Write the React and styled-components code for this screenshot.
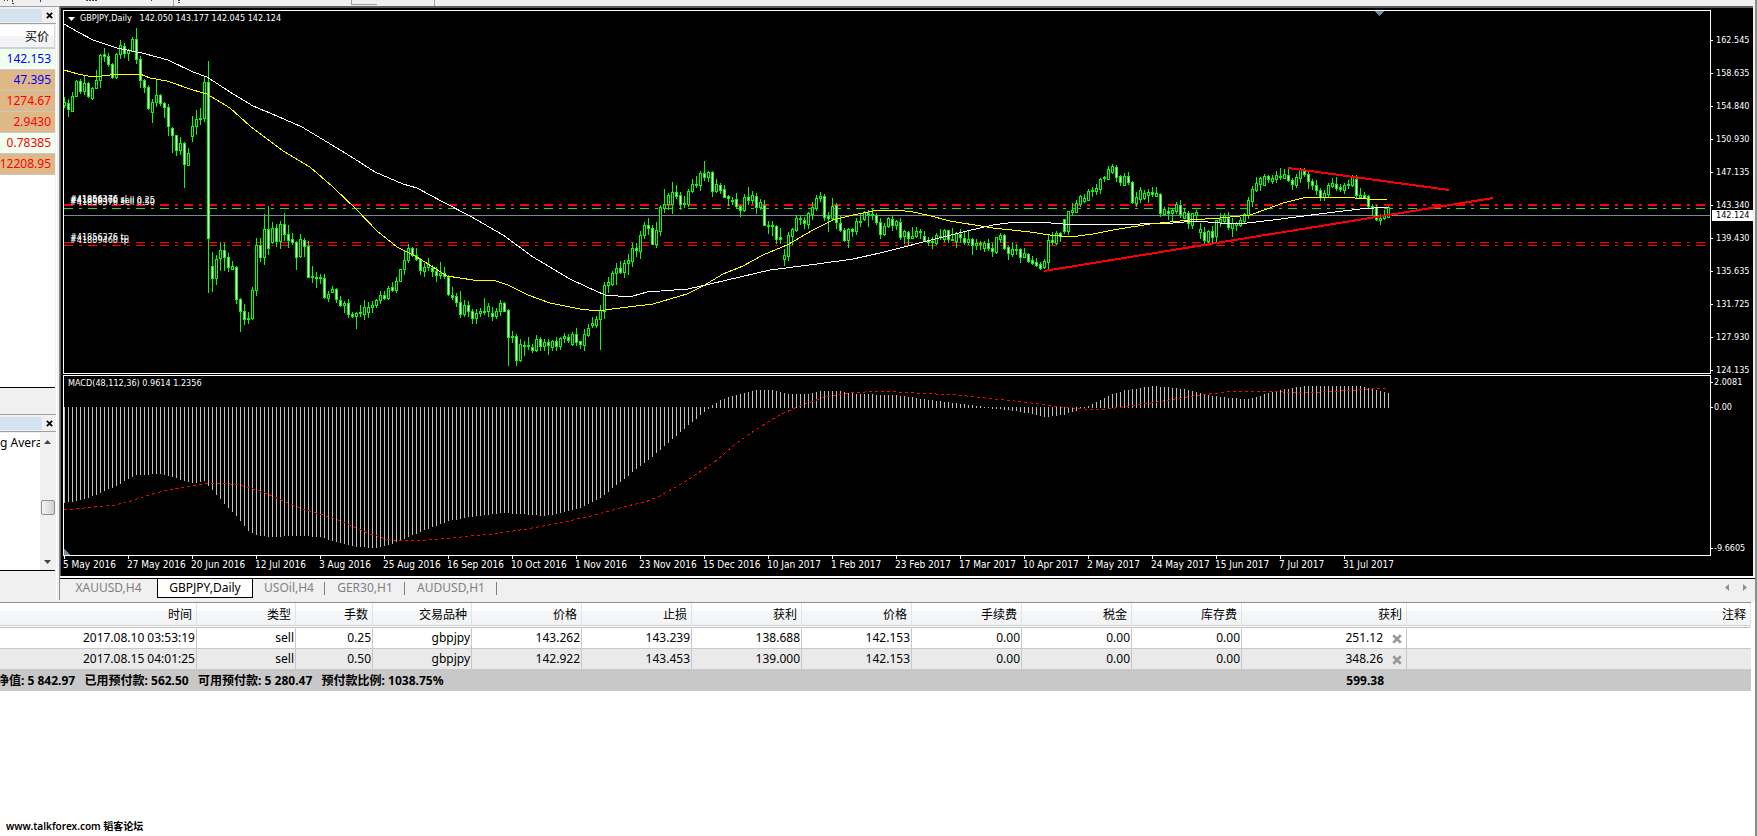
import React from "react";
import styled, { createGlobalStyle } from "styled-components";

const UI_FONT = '"Noto Sans", "Noto Sans CJK SC", sans-serif';
const CHART_FONT = '"DejaVu Sans Condensed", "DejaVu Sans", sans-serif';

const GlobalStyle = createGlobalStyle`
  *, *::before, *::after { box-sizing: border-box; }
  body { margin: 0; background: #fff; font-family: ${UI_FONT}; font-size: 12px; color: #000; }
  button { font: inherit; color: inherit; background: none; border: 0; padding: 0; cursor: pointer; }
  svg { display: block; }
`;

/* ---------- data ---------- */

// Daily bars as "high,bodyTop,bodyBottom,low" followed by u (bull) or d (bear), in chart rows.
const BARS = `97,102,105,107u 99,103,109,116d 92,96,111,111u 80,81,96,96u 79,81,91,93d 76,83,91,94u 82,83,96,97d 87,88,98,99u 70,80,88,88u 54,55,80,87u
48,54,56,61d 53,56,64,66d 63,64,77,78d 53,54,77,78u 40,45,54,58u 43,46,53,57d 49,50,53,60u 37,39,51,51u 28,39,59,63d 56,59,80,87d
79,80,87,92d 85,87,108,109d 99,102,112,122u 79,95,102,106u 94,95,103,105d 102,103,107,117d 104,107,126,135d 127,128,135,152d 135,135,150,155d 137,143,150,154u
142,143,164,187d 148,153,165,165u 116,126,136,141u 110,119,126,134u 108,118,119,124u 77,82,118,121u 61,82,238,292d 252,266,278,291d 255,259,278,284u 242,250,258,270u
243,250,257,270d 253,257,267,271d 261,266,269,269u 266,267,299,303d 298,299,311,331d 304,311,319,324d 312,318,319,323u 287,290,318,319u 238,245,290,295u 238,245,257,261d
214,229,257,264u 206,229,248,254d 222,228,242,243u 224,228,241,246d 221,224,241,248u 213,224,234,240d 225,234,240,247d 233,239,242,244d 241,242,257,269d 234,239,256,257u
238,240,246,256d 241,246,277,277d 266,276,277,282d 272,277,278,287u 274,277,278,283u 274,278,297,298d 291,294,298,301u 286,289,292,292u 288,289,299,302d 296,300,305,306d
301,303,305,312u 299,303,314,317d 312,314,316,317d 312,313,316,328u 305,312,313,316u 300,307,314,319u 302,307,312,317u 301,305,307,312u 299,300,305,307u 291,295,300,303u
291,295,298,299d 286,288,298,299u 282,287,290,291d 277,281,290,292u 269,269,281,281u 250,260,269,274u 244,248,260,262u 247,248,255,256d 248,255,259,260d 258,259,270,274d
263,267,271,276u 258,264,267,270u 265,268,271,276d 267,271,275,281d 262,273,275,278u 267,273,276,278d 275,277,294,295d 287,295,297,299d 293,296,302,306d 291,302,314,317d
300,305,314,316u 301,305,311,316d 309,311,318,323d 309,313,318,323u 308,311,313,316u 298,311,312,314u 303,306,311,316u 307,313,316,320d 308,311,316,318u 300,303,311,315u
302,303,311,311d 309,310,337,365d 331,336,337,342d 334,336,360,365d 339,344,360,361u 341,345,346,355u 337,345,346,349u 344,347,350,352d 335,339,350,351u 337,339,346,350d
339,342,346,350u 339,342,345,354d 340,341,347,350u 337,341,346,350d 337,338,346,349u 333,336,338,342u 334,337,340,342d 332,334,344,345u 328,334,342,345d 341,341,344,348d
329,334,345,350u 324,328,335,336u 317,323,325,327u 316,319,325,327u 305,310,319,349u 282,285,311,318u 277,282,285,292u 271,273,284,285u 263,268,273,284u 261,268,272,273d
260,263,272,277u 254,260,263,274u 243,248,261,266u 243,248,250,256d 231,235,251,258u 222,225,235,238u 218,225,228,234d 225,228,244,244d 222,230,244,247u 205,207,231,235u
189,204,208,212u 193,195,204,209u 182,192,204,213u 185,192,196,198d 192,195,204,209d 196,203,204,207u 189,191,204,206u 179,184,191,192u 176,184,185,187u 171,173,185,190u
161,173,177,180d 171,172,177,181u 171,172,191,196d 179,184,191,192u 183,185,190,193d 185,189,197,197d 195,196,198,205d 197,200,201,204u 193,199,206,208d 205,206,210,216d
194,197,210,211u 187,197,200,204d 191,195,200,203u 193,196,207,213d 199,202,207,209u 200,205,225,225d 221,225,226,233d 221,225,226,235u 225,226,239,243d 228,237,239,243d
249,255,259,265u 232,235,256,260u 228,229,236,244u 215,218,230,231u 216,218,219,224u 217,220,223,228d 212,213,224,228u 202,207,214,219u 195,198,208,210u 192,196,198,201u
194,196,217,220d 212,216,218,231d 198,206,218,220u 203,205,222,228d 216,223,230,231d 228,230,240,241d 228,229,240,247u 228,229,231,236d 218,221,231,234u 214,221,222,226u
211,212,219,220u 210,213,214,226u 209,214,215,219u 213,215,222,224d 218,222,234,238d 223,226,234,235u 217,218,226,227u 216,219,225,230d 220,221,225,229u 218,222,237,239d
230,231,236,243u 231,232,238,244d 227,236,238,238u 227,231,236,237u 229,231,232,238u 231,236,240,241d 237,240,242,245d 237,241,242,248u 233,235,243,244u 229,236,237,239u
229,230,239,241u 230,230,239,242d 228,239,240,240u 232,233,241,247u 229,234,237,242d 232,238,242,244d 231,239,242,244u 238,239,245,254d 239,243,245,249u 241,243,244,249u
241,243,248,251u 239,243,248,250d 243,248,251,256d 237,237,252,253u 233,235,239,242u 234,235,248,249d 246,247,253,259d 242,249,254,256u 244,249,250,254u 248,249,257,262d
248,253,257,257u 253,254,261,262d 256,260,263,264d 258,262,265,266d 262,264,268,269d 259,261,267,268u 234,240,262,268u 232,240,242,244d 231,233,243,244u 232,233,236,241d
219,219,231,233d 211,211,231,234u 203,210,212,214u 200,203,212,212u 195,196,204,206u 194,198,201,202u 189,191,200,200u 187,190,191,196u 184,188,191,194u 178,179,189,193u
176,177,178,181u 166,169,179,179u 164,166,172,173u 165,167,177,181d 175,176,182,185d 173,176,185,185u 172,176,182,184d 181,182,202,203d 192,197,203,206u 187,190,199,202u
190,193,198,199u 189,192,195,202u 187,192,194,196d 187,193,196,196u 193,194,213,216d 207,209,214,215u 207,211,213,219d 208,210,213,221u 202,204,211,213u 200,205,214,217d
208,212,218,218u 211,213,223,228d 213,213,225,228u 210,212,215,220u 223,229,232,238u 227,232,240,244d 230,231,241,244u 226,231,237,242d 220,220,236,241u 213,219,222,226u
213,215,221,223u 212,218,227,229d 218,223,228,236u 222,223,225,230u 217,220,225,226u 213,214,221,222u 197,200,215,218u 186,189,201,206u 177,183,190,191u 177,178,184,190u
174,176,185,185u 175,176,179,182d 175,178,181,183u 171,175,179,182u 168,176,177,179u 169,174,178,178u 169,175,180,181d 178,180,184,189d 174,177,185,187u 168,170,178,182u
168,171,174,176d 171,174,181,188d 179,181,185,189d 180,185,190,194d 188,190,197,200d 190,193,197,200u 183,185,194,196u 178,183,186,187u 177,184,188,190d 184,187,189,191d
183,185,190,193u 180,184,185,188u 175,177,185,186u 175,179,195,197d 188,195,197,197u 192,195,198,198d 195,196,206,207d 204,206,208,215d 205,207,219,220d 214,218,220,224u
210,216,218,219u 206,207,217,217u`
  .split(/\s+/)
  .map((bar) => ({ rows: bar.slice(0, -1).split(",").map(Number), bear: bar.endsWith("d") }));

const SLOW_MA =
  "64,24 78,32 93,40 117,48 142,53 168,60 193,72 207,77 230,92 253,106 277,116 302,127 327,142 350,156 375,172 403,184 417,188 443,202 470,216 503,235 533,257 570,279 587,287 605,295 618,296 633,296 647,292 688,289 710,284 740,277 770,270 817,264 853,259 880,253 900,248 923,242 967,231 993,225 1015,222 1038,222 1063,224 1140,224 1173,223 1195,221 1220,223 1247,223 1273,220 1327,213 1360,209 1388,207";
const FAST_MA =
  "64,70 78,74 88,76 102,76 118,74 140,74 150,78 167,81 193,90 207,94 230,108 250,126 283,151 310,167 333,187 357,210 377,231 397,247 417,257 447,276 473,280 493,280 508,285 528,295 550,303 580,309 597,311 620,308 653,304 687,294 703,286 723,274 743,266 763,255 787,245 813,230 833,220 853,215 873,211 897,210 913,212 927,215 950,221 993,228 1030,232 1050,235 1070,237 1093,234 1113,230 1150,224 1190,220 1220,218 1250,215 1267,209 1283,203 1307,197 1343,197 1367,199 1387,200";
const SIGNAL =
  "64,510 115,505 128,502 143,497 167,490 203,484 220,483 240,485 260,491 300,508 336,519 370,534 390,540 415,541 450,538 493,534 527,529 560,523 595,515 627,506 645,502 660,496 688,480 717,460 735,444 754,431 776,417 797,407 825,397 849,393 882,391 915,393 957,395 1023,402 1061,407 1085,409 1108,409 1151,403 1193,396 1226,392 1269,391 1283,392 1321,392 1358,390 1387,388";
const HISTOGRAM = [
  [64, 502], [80, 499], [97, 494], [105, 489], [115, 486], [125, 479], [137, 474], [160, 473], [173, 476], [187, 481],
  [197, 482], [204, 480], [212, 489], [220, 498], [228, 507], [233, 512], [241, 521], [248, 530], [257, 534], [267, 536],
  [297, 535], [320, 536], [336, 541], [358, 546], [374, 547], [390, 544], [420, 531], [448, 520], [470, 516], [504, 512], [545, 515],
  [570, 510], [583, 506], [600, 497], [616, 484], [644, 462], [660, 449], [681, 430], [705, 410], [712, 405], [720, 400],
  [735, 395], [757, 390], [773, 390], [787, 394], [809, 394], [820, 391], [837, 391], [856, 394], [896, 395], [929, 400],
  [962, 404], [985, 407], [1009, 409], [1033, 413], [1045, 416], [1063, 414], [1075, 410], [1088, 406], [1103, 398],
  [1115, 393], [1125, 390], [1155, 386], [1184, 389], [1207, 395], [1231, 398], [1248, 399], [1259, 396], [1278, 390],
  [1306, 386], [1358, 386], [1377, 390], [1389, 393],
];

const PRICE_TICKS = ["162.545", "158.635", "154.840", "150.930", "147.135", "143.340", "139.430", "135.635", "131.725", "127.930", "124.135"];
const DATES = [
  "5 May 2016", "27 May 2016", "20 Jun 2016", "12 Jul 2016", "3 Aug 2016", "25 Aug 2016", "16 Sep 2016", "10 Oct 2016",
  "1 Nov 2016", "23 Nov 2016", "15 Dec 2016", "10 Jan 2017", "1 Feb 2017", "23 Feb 2017", "17 Mar 2017", "10 Apr 2017",
  "2 May 2017", "24 May 2017", "15 Jun 2017", "7 Jul 2017", "31 Jul 2017",
];
const QUOTES = [
  { price: "142.153", color: "#0000ff", bg: "#f0fff0" },
  { price: "47.395", color: "#0000ff", bg: "#deb887" },
  { price: "1274.67", color: "#ff0000", bg: "#deb887" },
  { price: "2.9430", color: "#ff0000", bg: "#deb887" },
  { price: "0.78385", color: "#ff0000", bg: "#f0fff0" },
  { price: "12208.95", color: "#ff0000", bg: "#deb887" },
];
const TABS = [
  { name: "XAUUSD,H4", width: 97 },
  { name: "GBPJPY,Daily", width: 96, active: true },
  { name: "USOil,H4", width: 72, divided: true },
  { name: "GER30,H1", width: 80, divided: true },
  { name: "AUDUSD,H1", width: 92, divided: true },
];
const COLUMNS = [
  ["时间", 197], ["类型", 99], ["手数", 77], ["交易品种", 99], ["价格", 110], ["止损", 110], ["获利", 110],
  ["价格", 110], ["手续费", 110], ["税金", 110], ["库存费", 110], ["获利", 165], ["注释", 0],
];
const ORDERS = [
  ["2017.08.10 03:53:19", "sell", "0.25", "gbpjpy", "143.262", "143.239", "138.688", "142.153", "0.00", "0.00", "0.00", "251.12"],
  ["2017.08.15 04:01:25", "sell", "0.50", "gbpjpy", "142.922", "143.453", "139.000", "142.153", "0.00", "0.00", "0.00", "348.26"],
];

function histogramRow(x) {
  const k = Math.max(1, HISTOGRAM.findIndex(([px]) => px >= x));
  const [x0, y0] = HISTOGRAM[k - 1];
  const [x1, y1] = HISTOGRAM[k];
  return Math.round(y0 + ((y1 - y0) * (x - x0)) / (x1 - x0));
}

/* ---------- styled parts ---------- */

const Window = styled.div`
  display: flex;
  flex-direction: column;
  min-height: 100vh;
  border-right: 2px solid;
  border-image: linear-gradient(to right, #111 50%, #8c8c8c 50%) 1;
  overflow: hidden;
`;
const ToolStrip = styled.div`
  height: 6px;
  background: #f0f0f0;
`;
const Workspace = styled.div`
  display: flex;
  background: #f0f0f0;
`;
const Sidebar = styled.aside`
  flex: 0 0 60px;
  min-width: 0;
  display: flex;
  flex-direction: column;
  border-top: 1px solid #a0a0a0;
  border-right: 1px solid #8c8c8c;
  padding-right: 3px;
  box-shadow: inset -2px 0 #f0f0f0, inset -3px 0 #fff;
`;
const Panel = styled.section`
  display: flex;
  flex-direction: column;
  min-width: 0;
  border-bottom: ${(p) => (p.$last ? 0 : "1px solid #a0a0a0")};
`;
const PanelTitle = styled.div`
  display: flex;
  align-items: center;
  justify-content: flex-end;
  height: 17px;
  padding-right: 2px;
  margin-bottom: 1px;
  background: linear-gradient(#d5e2ef, #d5e2ef) 0 2px / 42px 13px no-repeat;
  border-bottom: 1px solid #a0a0a0;
`;
const CloseButton = styled.button`
  display: grid;
  place-items: center;
  width: 9px;
  height: 9px;
`;
const QuoteArea = styled.div`
  height: 363px;
  margin-right: 1px;
  background: #fff;
  border-bottom: 1px solid #000;
`;
const QuoteTable = styled.table`
  width: 55px;
  border-spacing: 0;
  table-layout: fixed;
`;
const QuoteHead = styled.th`
  height: 24px;
  padding: 0 5px 0 0;
  font-weight: normal;
  text-align: right;
  background: linear-gradient(#fff 50%, #f1f3f6 50%);
  border-right: 1px solid #d9d9d9;
  border-bottom: 2px solid #d0d0d0;
`;
const QuoteCell = styled.td`
  height: 21px;
  padding: 0 4px 0 0;
  line-height: 20px;
  text-align: right;
  direction: rtl;
  color: ${(p) => p.$color};
  background: ${(p) => p.$bg};
  border-bottom: 1px solid #c8c8c8;
`;
const PanelFoot = styled.div`
  height: 26px;
`;
const NavArea = styled.div`
  display: flex;
  height: 138px;
  margin-right: 1px;
  background: #fff;
  border-bottom: 1px solid #000;
`;
const NavItem = styled.div`
  flex: 1;
  min-width: 0;
  padding-top: 1px;
  line-height: 18px;
  white-space: nowrap;
  overflow: hidden;
`;
const ScrollTrack = styled.div`
  display: flex;
  flex-direction: column;
  align-items: center;
  flex: 0 0 15px;
  background: #f0f0f0;
`;
const ScrollArrow = styled.button`
  display: grid;
  place-items: center;
  width: 15px;
  height: 17px;
`;
const ScrollThumb = styled.div`
  width: 14px;
  height: 15px;
  margin: 50px 0 auto;
  border: 1px solid #8e8e8e;
  border-radius: 2px;
  background: linear-gradient(to right, #f4f4f4, #cfcfcf);
`;
const Main = styled.main`
  flex: 1;
  min-width: 0;
  display: flex;
  flex-direction: column;
`;
const ChartFrame = styled.div`
  display: flex;
  flex-direction: column;
  gap: 1px;
  margin-right: 2px;
  padding: 2px 0 0 2px;
  background: #000;
  color: #fff;
  font-family: ${CHART_FONT};
  font-size: 9px;
  line-height: 11px;
  border-top: 2px solid #5c5c5c;
  border-left: 1px solid #5c5c5c;
`;
const PaneRow = styled.div`
  display: flex;
  height: ${(p) => p.$height}px;
  position: relative;
`;
const Plot = styled.div`
  flex: 1;
  min-width: 0;
  position: relative;
  border: 1px solid #fff;
  overflow: hidden;
`;
const PlotTitle = styled.div`
  position: absolute;
  top: 2px;
  left: 4px;
  display: flex;
  align-items: center;
  gap: 5px;
  white-space: pre;
`;
const Axis = styled.div`
  flex: 0 0 42px;
  display: flex;
  flex-direction: column;
  gap: ${(p) => p.$gap}px;
  padding: ${(p) => p.$top}px 0 2px;
`;
const AxisTick = styled.div`
  display: flex;
  flex-shrink: 0;
  align-items: center;
  gap: ${(p) => p.$gap}px;
  height: 11px;
  margin-top: ${(p) => (p.$last ? "auto" : 0)};
  &::before {
    content: "";
    width: 2px;
    height: 1px;
    background: #fff;
  }
`;
const BidTag = styled.div`
  position: absolute;
  top: 200px;
  right: 0;
  width: 41px;
  padding-left: 4px;
  background: #fff;
  color: #000;
`;
const TimeAxis = styled.div`
  display: flex;
  height: 20px;
  margin-top: -1px;
  font-size: 10px;
  overflow: hidden;
`;
const TimeTick = styled.div`
  flex: 0 0 64px;
  padding-top: 3px;
  white-space: nowrap;
  background: linear-gradient(#fff, #fff) 1px 0 / 1px 3px no-repeat;
`;
const TabBar = styled.nav`
  display: flex;
  height: 22px;
  padding-right: 8px;
  border-top: 1px solid #000;
  box-shadow: 0 -2px #fff;
`;
const Tab = styled.button`
  height: ${(p) => (p.$active ? 19 : 18)}px;
  width: ${(p) => p.$width}px;
  line-height: 18px;
  color: ${(p) => (p.$active ? "#000" : "#808080")};
  background: ${(p) => (p.$active ? "#fff" : "none")};
  border: solid #000;
  border-width: ${(p) => (p.$active ? "0 1px 1px 1px" : 0)};
  position: relative;
  &::after {
    content: "";
    display: ${(p) => (p.$divided ? "block" : "none")};
    position: absolute;
    right: 0;
    top: 3px;
    width: 1px;
    height: 13px;
    background: #808080;
  }
`;
const TabArrows = styled.div`
  display: flex;
  gap: 14px;
  margin-left: auto;
  height: 17px;
  align-items: center;
`;
const Terminal = styled.section`
  margin-right: 4px;
  border-top: 1px solid #909090;
  background: #fff;
`;
const TerminalGap = styled.div`
  height: 2px;
  background: #f0f0f0;
`;
const OrderTable = styled.table`
  width: 100%;
  table-layout: fixed;
  border-collapse: separate;
  border-spacing: 0;
`;
const HeadCell = styled.th`
  height: 25px;
  padding: 0 4px 3px 0;
  font-weight: normal;
  text-align: right;
  background: linear-gradient(to bottom, #fff 8px, #f6f7f9 8px, #f1f3f5 22px, #d0d0d0 22px, #d0d0d0 23px, #fff 23px, #fff 24px, #c0c0c0 24px);
  border-right: 1px solid #e2e4e7;
`;
const Cell = styled.td`
  height: 21px;
  padding: 0 1px 0 0;
  line-height: 20px;
  text-align: right;
  white-space: nowrap;
  background: ${(p) => (p.$odd ? "#eaeaea" : "#fff")};
  border-right: ${(p) => (p.$last ? 0 : "1px solid #c8c8c8")};
  border-bottom: 1px solid #c8c8c8;
`;
const Profit = styled.div`
  display: flex;
  justify-content: flex-end;
  align-items: center;
  gap: 9px;
  padding-right: 4px;
`;
const SumCell = styled.td`
  height: 21px;
  padding: 0 23px 0 0;
  line-height: 20px;
  font-weight: bold;
  text-align: ${(p) => (p.$left ? "left" : "right")};
  white-space: pre;
  overflow: hidden;
  background: #c8c8c8;
`;
const Balance = styled.span`
  margin-left: -3px;
`;
const Credit = styled.footer`
  margin-top: auto;
  padding: 0 6px 2px;
  font-size: 10px;
  line-height: 16px;
  font-weight: 600;
`;

/* ---------- drawings ---------- */

const Cross = ({ size, color, weight }) => (
  <svg width={size} height={size} viewBox="0 0 8 8" aria-hidden="true">
    <path d="M1 1L7 7M7 1L1 7" stroke={color} strokeWidth={weight} />
  </svg>
);

const Arrow = ({ d, color, w, h }) => (
  <svg width={w} height={h} aria-hidden="true">
    <path d={d} fill={color} />
  </svg>
);

const OrderLine = ({ y, color, width }) => (
  <line x1="0" x2="100%" y1={y} y2={y} stroke={color} strokeWidth={width} strokeDasharray="9 6 3 6" />
);

function PriceChart() {
  return (
    <svg width="100%" height="362" shapeRendering="crispEdges" role="img" aria-label="GBPJPY daily candles">
      <g transform="translate(0 -11)">
        <OrderLine y={205} color="#ff0000" width={2} />
        <OrderLine y={208.5} color="#32cd32" width={1} />
        <line x1="0" x2="100%" y1="215.5" y2="215.5" stroke="#778899" />
        <OrderLine y={242.5} color="#ff0000" width={1} />
        <OrderLine y={245.5} color="#ff0000" width={1} />
      </g>
      <g transform="translate(-64 -11)">
        {BARS.map(({ rows: [high, top, bottom, low], bear }, i) => {
          const x = 64 + 4 * i;
          return (
            <g key={i}>
              <rect x={x} y={high} width="1" height={low - high + 1} fill="#00ff00" />
              <rect x={x - 1} y={top} width="3" height={bottom - top + 1} fill="#00ff00" />
              {bottom - top > 1 && (
                <rect x={x} y={top + 1} width="1" height={bottom - top - 1} fill={bear ? "#fff" : "#000"} />
              )}
            </g>
          );
        })}
        <polyline points={SLOW_MA} fill="none" stroke="#fff" />
        <polyline points={FAST_MA} fill="none" stroke="#ff0" />
        <path d="M1044 271L1493 198M1288 168L1449 190" stroke="#f00" strokeWidth="2" />
        <path d="M1375 11h9l-4.500 5z" fill="#778899" />
      </g>
      <g fill="#fff" shapeRendering="auto">
        <text x="6" y="191">#41856376 sl</text>
        <text x="6" y="192">#41809460 sell 0.25</text>
        <text x="6" y="194">#41856376 sell 0.50</text>
        <text x="6" y="229">#41856376 tp</text>
        <text x="6" y="232">#41809460 tp</text>
      </g>
    </svg>
  );
}

function MacdChart() {
  return (
    <svg width="100%" height="179" shapeRendering="crispEdges" role="img" aria-label="MACD histogram">
      <g transform="translate(-64 -376)">
        {BARS.map((_, i) => {
          const x = 64 + 4 * i;
          const y = histogramRow(x);
          const top = Math.min(y, 407);
          return <rect key={i} x={x} y={top} width="1" height={Math.max(y, 407) - top + 1} fill="#c0c0c0" />;
        })}
        <polyline points={SIGNAL} fill="none" stroke="#f00" strokeDasharray="3 3" />
        <path d="M64 549L70 555H64z" fill="#778899" />
      </g>
    </svg>
  );
}

export default function App() {
  return (
    <Window>
      <GlobalStyle />
      <ToolStrip>
        <svg width="100%" height="6" shapeRendering="crispEdges" aria-hidden="true">
          <path d="M4 0v1M7 0v1M12 0v3h3M40 0v3M86 .5h12M151 0v1M178 2.500h3M178 .5h3" stroke="#444" fill="none" strokeDasharray="2 1" />
          <path d="M173.500 0v6M434.500 0v6" stroke="#a0a0a0" />
          <path d="M351.500 0v4h25" stroke="#a0a0a0" fill="none" />
        </svg>
      </ToolStrip>
      <Workspace>
        <Sidebar>
          <Panel>
            <PanelTitle>
              <CloseButton aria-label="关闭">
                <Cross size={7} color="#000" weight={2} />
              </CloseButton>
            </PanelTitle>
            <QuoteArea>
              <QuoteTable>
                <thead>
                  <tr>
                    <QuoteHead>买价</QuoteHead>
                  </tr>
                </thead>
                <tbody>
                  {QUOTES.map((q) => (
                    <tr key={q.price}>
                      <QuoteCell $color={q.color} $bg={q.bg}>{q.price}</QuoteCell>
                    </tr>
                  ))}
                </tbody>
              </QuoteTable>
            </QuoteArea>
            <PanelFoot />
          </Panel>
          <Panel $last>
            <PanelTitle>
              <CloseButton aria-label="关闭">
                <Cross size={7} color="#000" weight={2} />
              </CloseButton>
            </PanelTitle>
            <NavArea>
              <NavItem>g Avera</NavItem>
              <ScrollTrack>
                <ScrollArrow aria-label="向上">
                  <Arrow d="M0 4L3.500 0L7 4z" color="#444" w={7} h={4} />
                </ScrollArrow>
                <ScrollThumb />
                <ScrollArrow aria-label="向下">
                  <Arrow d="M0 0L3.500 4L7 0z" color="#444" w={7} h={4} />
                </ScrollArrow>
              </ScrollTrack>
            </NavArea>
          </Panel>
        </Sidebar>
        <Main>
          <ChartFrame>
            <PaneRow $height={364}>
              <Plot>
                <PriceChart />
                <PlotTitle>
                  <Arrow d="M0 0h7L3.500 4z" color="#fff" w={7} h={4} />
                  {"GBPJPY,Daily   142.050 143.177 142.045 142.124"}
                </PlotTitle>
              </Plot>
              <Axis $gap={22} $top={25}>
                {PRICE_TICKS.map((t) => (
                  <AxisTick key={t} $gap={3}>{t}</AxisTick>
                ))}
              </Axis>
              <BidTag>142.124</BidTag>
            </PaneRow>
            <PaneRow $height={181}>
              <Plot>
                <MacdChart />
                <PlotTitle>MACD(48,112,36) 0.9614 1.2356</PlotTitle>
              </Plot>
              <Axis $gap={14} $top={2}>
                <AxisTick $gap={1}>2.0081</AxisTick>
                <AxisTick $gap={1}>0.00</AxisTick>
                <AxisTick $gap={1} $last>-9.6605</AxisTick>
              </Axis>
            </PaneRow>
            <TimeAxis>
              {DATES.map((d) => (
                <TimeTick key={d}>{d}</TimeTick>
              ))}
            </TimeAxis>
          </ChartFrame>
          <TerminalGap />
          <TabBar>
            {TABS.map((t) => (
              <Tab key={t.name} $width={t.width} $active={t.active} $divided={t.divided}>{t.name}</Tab>
            ))}
            <TabArrows>
              <button aria-label="向左">
                <Arrow d="M4 0v7L0 3.500z" color="#909090" w={4} h={7} />
              </button>
              <button aria-label="向右">
                <Arrow d="M0 0v7L4 3.500z" color="#909090" w={4} h={7} />
              </button>
            </TabArrows>
          </TabBar>
        </Main>
      </Workspace>
      <TerminalGap />
      <Terminal>
        <OrderTable>
          <colgroup>
            {COLUMNS.map(([, w], i) => (
              <col key={i} width={w || undefined} />
            ))}
          </colgroup>
          <thead>
            <tr>
              {COLUMNS.map(([name], i) => (
                <HeadCell key={i}>{name}</HeadCell>
              ))}
            </tr>
          </thead>
          <tbody>
            {ORDERS.map((row, r) => (
              <tr key={row[0]}>
                {row.map((v, i) => (
                  <Cell key={i} $odd={r % 2 === 1}>
                    {i === 11 ? (
                      <Profit>
                        {v}
                        <CloseButton aria-label="平仓">
                          <Cross size={10} color="#999" weight={2} />
                        </CloseButton>
                      </Profit>
                    ) : (
                      v
                    )}
                  </Cell>
                ))}
                <Cell $odd={r % 2 === 1} $last />
              </tr>
            ))}
            <tr>
              <SumCell colSpan={11} $left>
                <Balance>{"净值: 5 842.97   已用预付款: 562.50   可用预付款: 5 280.47   预付款比例: 1038.75%"}</Balance>
              </SumCell>
              <SumCell>599.38</SumCell>
              <SumCell />
            </tr>
          </tbody>
        </OrderTable>
      </Terminal>
      <Credit>www.talkforex.com 韬客论坛</Credit>
    </Window>
  );
}
